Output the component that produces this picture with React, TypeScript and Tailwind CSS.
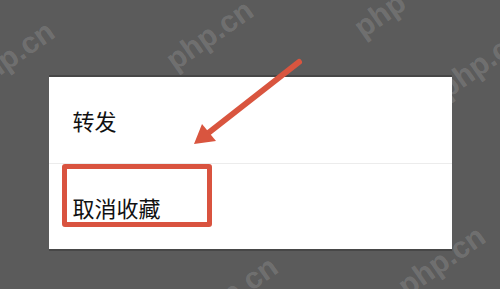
export default function App() {
  return (
    <div
      className="relative w-[500px] h-[289px] overflow-hidden bg-[#5b5b5b] flex justify-center pt-[77px]"
      style={{ fontFamily: '"Noto Sans CJK SC", "Noto Sans", sans-serif' }}
    >
      {/* Menu card */}
      <div className="relative w-[403px] h-[172px] bg-white flex flex-col shadow-[0_-2px_0_#474747,0_2px_0_#474747]">
        <div className="h-[87px] flex items-center pl-[24px] border-b border-[#ececec]">
          <span className="text-[22px] leading-none text-[#111]">转发</span>
        </div>
        <div className="flex-1 flex items-center pl-[24px] pt-[1px]">
          <span className="text-[22px] leading-none text-[#111]">取消收藏</span>
        </div>

        {/* Highlight box */}
        <div className="absolute left-[13px] top-[87px] w-[150px] h-[63px] border-[5px] border-[#d9533f] rounded-[3px]" />
      </div>

      {/* Arrow */}
      <svg className="absolute inset-0 pointer-events-none" width="500" height="289" viewBox="0 0 500 289">
        <line x1="299" y1="62" x2="207" y2="134" stroke="#d9553f" strokeWidth="6" strokeLinecap="round" />
        <polygon points="194,144 202,124 216,141" fill="#d9553f" />
      </svg>

      {/* Watermarks */}
      <div className="absolute inset-0 pointer-events-none text-white/15 font-bold text-[30px]" style={{ fontFamily: '"Liberation Sans", sans-serif' }}>
        <span className="absolute left-[-22px] top-[28px] -rotate-[35deg]">hp.cn</span>
        <span className="absolute left-[160px] top-[12px] -rotate-[35deg]">php.cn</span>
        <span className="absolute left-[352px] top-[-8px] -rotate-[35deg]">php</span>
        <span className="absolute left-[432px] top-[40px] -rotate-[35deg]">php.cn</span>
        <span className="absolute left-[218px] top-[258px] -rotate-[35deg]">p.cn</span>
        <span className="absolute left-[392px] top-[238px] -rotate-[35deg]">php.cn</span>
      </div>
    </div>
  );
}
